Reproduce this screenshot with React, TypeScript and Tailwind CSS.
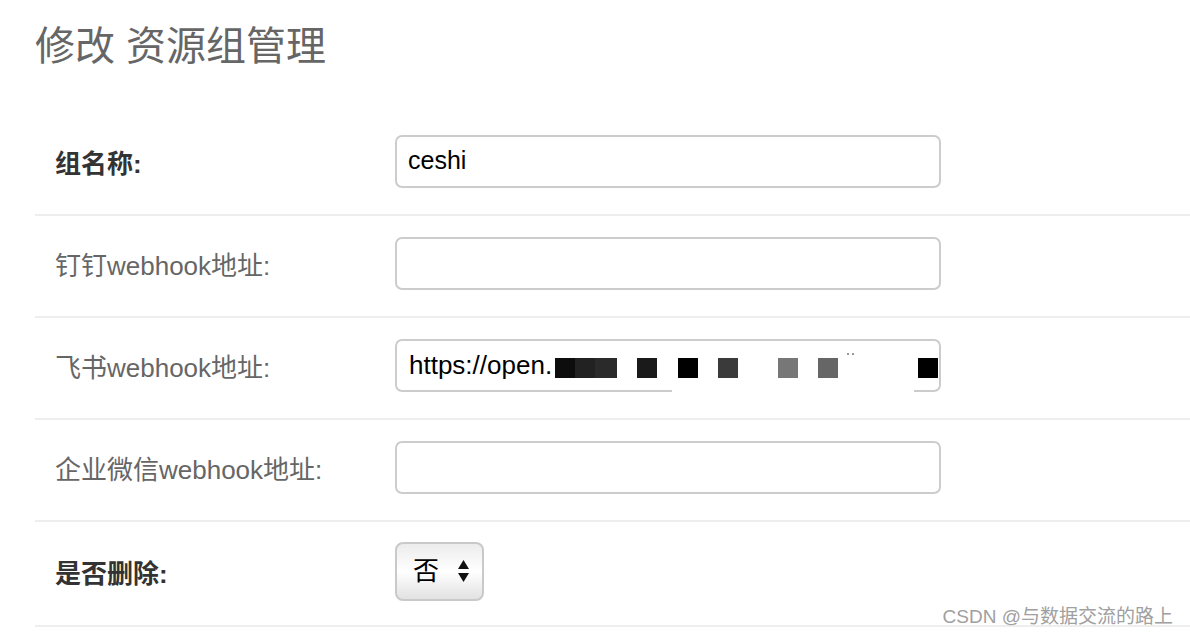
import React from "react";

const FONT = { fontFamily: '"Liberation Sans", "Noto Sans CJK SC", sans-serif' };

function Row({
  label,
  bold,
  children,
  tall,
}: {
  label: string;
  bold?: boolean;
  children: React.ReactNode;
  tall?: boolean;
}) {
  return (
    <div
      className={`flex ${tall ? "h-[105px]" : "h-[102px]"} items-center border-b-2 border-[#eeeeee] pl-[20px]`}
    >
      <div
        className={`w-[340px] text-[26px] leading-[30px] ${bold ? "font-bold text-[#333333]" : "text-[#666666]"}`}
      >
        {label}
      </div>
      {children}
    </div>
  );
}

function TextBox({ value }: { value?: string }) {
  return (
    <div className="mb-[6px] flex h-[53px] w-[546px] items-center rounded-[7px] border-2 border-[#cccccc] bg-white pl-[11px] text-[25px] text-black">
      {value}
    </div>
  );
}

const blocks: [number, number, string][] = [
  [160, 20, "#0d0d0d"],
  [180, 20, "#222222"],
  [200, 22, "#2a2a2a"],
  [242, 20, "#1a1a1a"],
  [283, 20, "#000000"],
  [323, 20, "#3a3a3a"],
  [383, 20, "#777777"],
  [423, 20, "#666666"],
  [523, 20, "#000000"],
];

function RedactedBox() {
  return (
    <div className="relative mb-[6px] flex h-[53px] w-[546px] items-center rounded-[7px] border-2 border-[#cccccc] bg-white pl-[12px] text-[26px] text-black">
      <span className="whitespace-nowrap">https://open.</span>
      {blocks.map(([l, w, c], i) => (
        <span
          key={i}
          className="absolute top-[17px] h-[20px]"
          style={{ left: l - 2, width: w, backgroundColor: c }}
        />
      ))}
      <span className="absolute left-[275px] bottom-[-2px] h-[4px] w-[242px] bg-white" />
      <span className="absolute left-[450px] top-[12px] h-[2px] w-[2px] bg-[#999999]" />
      <span className="absolute left-[455px] top-[12px] h-[2px] w-[2px] bg-[#999999]" />
    </div>
  );
}

function SelectBox() {
  return (
    <div className="mb-[5px] flex h-[59px] w-[89px] items-center justify-between rounded-[8px] border-2 border-[#c9c9c9] bg-gradient-to-b from-[#ececec] via-white to-[#e2e2e2] pl-[16px] pr-[13px] text-[26px] text-black">
      <span>否</span>
      <svg width="11" height="22" viewBox="0 0 11 22">
        <polygon points="5.5,0 11,9 0,9" fill="#111" />
        <polygon points="0,13 11,13 5.5,22" fill="#111" />
      </svg>
    </div>
  );
}

export default function App() {
  return (
    <div className="relative h-[636px] w-[1190px] overflow-hidden bg-white" style={FONT}>
      <div className="ml-[35px]">
        <div className="h-[114px] pt-[24px] text-[40px] leading-[44px] text-[#666666]">
          修改 资源组管理
        </div>
        <Row label="组名称:" bold>
          <TextBox value="ceshi" />
        </Row>
        <Row label="钉钉webhook地址:">
          <TextBox />
        </Row>
        <Row label="飞书webhook地址:">
          <RedactedBox />
        </Row>
        <Row label="企业微信webhook地址:">
          <TextBox />
        </Row>
        <Row label="是否删除:" bold tall>
          <SelectBox />
        </Row>
      </div>
      <div className="absolute right-[17px] bottom-[7px] text-[19px] leading-[24px] text-[#a0a0a0]">
        CSDN @与数据交流的路上
      </div>
    </div>
  );
}
